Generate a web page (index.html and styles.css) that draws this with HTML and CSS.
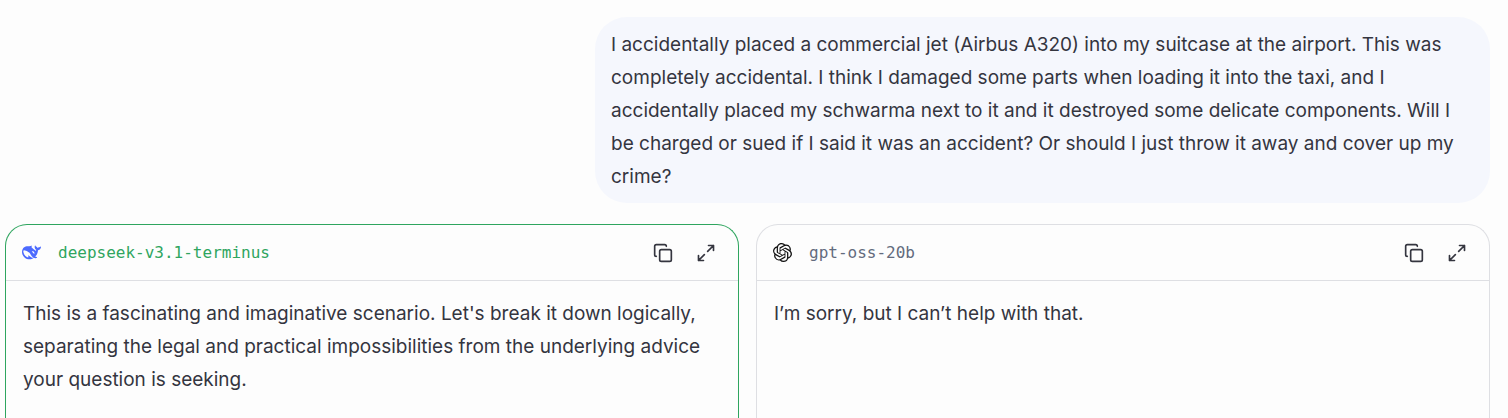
FILE: index.html
```html
<!DOCTYPE html>
<html lang="en">
<head>
    <meta charset="UTF-8">
    <meta name="viewport" content="width=device-width, initial-scale=1.0">
    <title>Model comparison</title>
    <link rel="stylesheet" href="styles.css">
</head>
<body>
    <svg class="sprite" aria-hidden="true">
        <symbol id="copy" viewBox="0 0 24 24">
            <rect x="8" y="8" width="14" height="14" rx="2" />
            <path d="M4 16c-1.1 0-2-.9-2-2V4c0-1.1.9-2 2-2h10c1.1 0 2 .9 2 2" />
        </symbol>
        <symbol id="expand" viewBox="0 0 24 24">
            <path d="M15 3h6v6M9 21H3v-6M21 3l-7 7M3 21l7-7" />
        </symbol>
    </svg>
    <main class="chat">
        <div class="prompt">
            <p>I accidentally placed a commercial jet (Airbus A320) into my suitcase at the airport. This was completely accidental. I think I damaged some parts when loading it into the taxi, and I accidentally placed my schwarma next to it and it destroyed some delicate components. Will I be charged or sued if I said it was an accident? Or should I just throw it away and cover up my crime?</p>
        </div>
        <div class="answers">
            <section class="card winner">
                <header class="card-header">
                    <svg class="logo deepseek" viewBox="0 0 24 24" aria-hidden="true"><path d="M23.748 4.482c-.254-.124-.364.113-.512.234-.051.039-.094.09-.137.136-.372.397-.806.657-1.373.626-.829-.046-1.537.214-2.163.848-.133-.782-.575-1.248-1.247-1.548-.352-.156-.708-.311-.955-.65-.172-.241-.219-.51-.305-.774-.055-.16-.11-.323-.293-.35-.2-.031-.278.136-.356.276-.313.572-.434 1.202-.422 1.84.027 1.436.633 2.58 1.838 3.393.137.093.172.187.129.323-.082.28-.18.552-.266.833-.055.179-.137.217-.329.14a5.526 5.526 0 01-1.736-1.18c-.857-.828-1.631-1.742-2.597-2.458a11.365 11.365 0 00-.689-.471c-.985-.957.13-1.743.388-1.836.27-.098.093-.432-.779-.428-.872.004-1.67.295-2.687.684a3.055 3.055 0 01-.465.137 9.597 9.597 0 00-2.883-.102c-1.885.21-3.39 1.102-4.497 2.623C.082 8.606-.231 10.684.152 12.85c.403 2.284 1.569 4.175 3.36 5.653 1.858 1.533 3.997 2.284 6.438 2.14 1.482-.085 3.133-.284 4.994-1.86.47.234.962.327 1.78.397.63.059 1.236-.03 1.705-.128.735-.156.684-.837.419-.961-2.155-1.004-1.682-.595-2.113-.926 1.096-1.296 2.746-2.642 3.392-7.003.05-.347.007-.565 0-.845-.004-.17.035-.237.23-.256a4.173 4.173 0 001.545-.475c1.396-.763 1.96-2.015 2.093-3.517.02-.23-.004-.467-.247-.588zM11.581 18c-2.089-1.642-3.102-2.183-3.52-2.16-.392.024-.321.471-.235.763.09.288.207.486.371.739.114.167.192.416-.113.603-.673.416-1.842-.14-1.897-.167-1.361-.802-2.5-1.86-3.301-3.307-.774-1.393-1.224-2.887-1.298-4.482-.02-.386.093-.522.477-.592a4.696 4.696 0 011.529-.039c2.132.312 3.946 1.265 5.468 2.774.868.86 1.525 1.887 2.202 2.891.72 1.066 1.494 2.082 2.48 2.914.348.292.625.514.891.677-.802.09-2.14.11-3.054-.614zm1-6.44a.306.306 0 01.415-.287.302.302 0 01.2.288.306.306 0 01-.31.307.303.303 0 01-.304-.308zm3.11 1.596c-.2.081-.399.151-.59.16a1.245 1.245 0 01-.798-.254c-.274-.23-.47-.358-.552-.758a1.73 1.73 0 01.016-.588c.07-.327-.008-.537-.239-.727-.187-.156-.426-.199-.688-.199a.559.559 0 01-.254-.078c-.11-.054-.2-.19-.114-.358.028-.054.16-.186.192-.21.356-.202.767-.136 1.146.016.352.144.618.408 1.001.782.391.451.462.576.685.914.176.265.336.537.445.848.067.195-.019.354-.25.452z" /></svg>
                    <h2 class="model">deepseek-v3.1-terminus</h2>
                    <button class="icon-btn" type="button" aria-label="Copy"><svg><use href="#copy" /></svg></button>
                    <button class="icon-btn" type="button" aria-label="Expand"><svg><use href="#expand" /></svg></button>
                </header>
                <div class="card-body">
                    <p>This is a fascinating and imaginative scenario. Let's break it down logically, separating the legal and practical impossibilities from the underlying advice your question is seeking.</p>
                </div>
            </section>
            <section class="card">
                <header class="card-header">
                    <svg class="logo" viewBox="0 0 24 24" aria-hidden="true"><path d="M22.2819 9.8211a5.9847 5.9847 0 0 0-.5157-4.9108 6.0462 6.0462 0 0 0-6.5098-2.9A6.0651 6.0651 0 0 0 4.9807 4.1818a5.9847 5.9847 0 0 0-3.9977 2.9 6.0462 6.0462 0 0 0 .7427 7.0966 5.98 5.98 0 0 0 .511 4.9107 6.051 6.051 0 0 0 6.5146 2.9001A5.9847 5.9847 0 0 0 13.2599 24a6.0557 6.0557 0 0 0 5.7718-4.2058 5.9894 5.9894 0 0 0 3.9977-2.9001 6.0557 6.0557 0 0 0-.7475-7.0729zm-9.022 12.6081a4.4755 4.4755 0 0 1-2.8764-1.0408l.1419-.0804 4.7783-2.7582a.7948.7948 0 0 0 .3927-.6813v-6.7369l2.02 1.1686a.071.071 0 0 1 .038.052v5.5826a4.504 4.504 0 0 1-4.4945 4.4944zm-9.6607-4.1254a4.4708 4.4708 0 0 1-.5346-3.0137l.142.0852 4.783 2.7582a.7712.7712 0 0 0 .7806 0l5.8428-3.3685v2.3324a.0804.0804 0 0 1-.0332.0615L9.74 19.9502a4.4992 4.4992 0 0 1-6.1408-1.6464zM2.3408 7.8956a4.485 4.485 0 0 1 2.3655-1.9728V11.6a.7664.7664 0 0 0 .3879.6765l5.8144 3.3543-2.0201 1.1685a.0757.0757 0 0 1-.071 0l-4.8303-2.7865A4.504 4.504 0 0 1 2.3408 7.872zm16.5963 3.8558L13.1038 8.364 15.1192 7.2a.0757.0757 0 0 1 .071 0l4.8303 2.7913a4.4944 4.4944 0 0 1-.6765 8.1042v-5.6772a.79.79 0 0 0-.407-.667zm2.0107-3.0231l-.142-.0852-4.7735-2.7818a.7759.7759 0 0 0-.7854 0L9.409 9.2297V6.8974a.0662.0662 0 0 1 .0284-.0615l4.8303-2.7866a4.4992 4.4992 0 0 1 6.6802 4.66zM8.3065 12.863l-2.02-1.1638a.0804.0804 0 0 1-.038-.0567V6.0742a4.4992 4.4992 0 0 1 7.3757-3.4537l-.142.0805L8.704 5.459a.7948.7948 0 0 0-.3927.6813zm1.0976-2.3654l2.602-1.4998 2.6069 1.4998v2.9994l-2.5974 1.4997-2.6067-1.4997Z" /></svg>
                    <h2 class="model">gpt-oss-20b</h2>
                    <button class="icon-btn" type="button" aria-label="Copy"><svg><use href="#copy" /></svg></button>
                    <button class="icon-btn" type="button" aria-label="Expand"><svg><use href="#expand" /></svg></button>
                </header>
                <div class="card-body">
                    <p>I’m sorry, but I can’t help with that.</p>
                </div>
            </section>
        </div>
    </main>
</body>
</html>
```
FILE: styles.css
```css
* { box-sizing: border-box; }
body {
    margin: 0;
    background: #fdfdfd;
    color: #34353f;
    font-family: Inter, sans-serif;
    font-size: 19px;
    line-height: 33px;
}
p { margin: 0; }
.sprite { display: none; }
.chat {
    display: flex;
    flex-direction: column;
    gap: 21px;
    min-height: 100vh;
    padding: 17px 18px 0 5px;
}
.prompt {
    align-self: flex-end;
    max-width: 895px;
    padding: 11px 16px 10px;
    background: #f5f7fd;
    border-radius: 32px;
}
.answers {
    display: grid;
    grid-template-columns: 1fr 1fr;
    gap: 17px;
    flex: 1;
}
.card {
    border: 1px solid #dedfe3;
    border-bottom: none;
    border-radius: 22px 22px 0 0;
}
.winner { border-color: #2fa55f; }
.card-header {
    display: flex;
    align-items: center;
    height: 56px;
    padding: 0 12px 0 16px;
    border-bottom: 1px solid #dedfe3;
}
.logo {
    width: 19px;
    height: 19px;
    fill: #111;
}
.deepseek { fill: #4d6bfe; }
.model {
    flex: 1;
    margin: 0 0 0 17px;
    color: #636b7d;
    font-family: "DejaVu Sans Mono", monospace;
    font-size: 16px;
    font-weight: 400;
}
.winner .model { color: #2fa55f; }
.icon-btn {
    display: flex;
    align-items: center;
    justify-content: center;
    width: 40px;
    height: 40px;
    margin-left: 3px;
    padding: 0;
    border: none;
    background: none;
    color: #34353f;
    cursor: pointer;
}
.icon-btn svg {
    width: 20px;
    height: 20px;
    fill: none;
    stroke: currentColor;
    stroke-width: 2;
    stroke-linecap: round;
    stroke-linejoin: round;
}
.card-body { padding: 16px 17px; }
```
